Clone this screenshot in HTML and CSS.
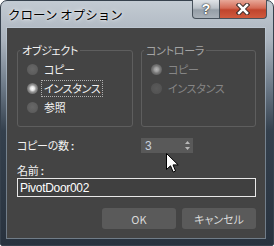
FILE: index.html
```html
<!DOCTYPE html>
<html lang="ja">

<head>
    <meta charset="UTF-8">
    <meta name="viewport" content="width=device-width, initial-scale=1.0">
    <title>クローン オプション</title>
    <link rel="stylesheet" href="styles.css">
</head>

<body>
    <div class="window">
        <!-- タイトルバー -->
        <div class="titlebar">
            <span class="title">クローン オプション</span>
            <div class="caption">
                <span class="btn-help">?</span>
                <span class="btn-close">
                    <svg width="14" height="12" viewBox="0 0 14 12">
                        <path d="M3 2 L11 10 M11 2 L3 10" stroke="#3a2a28" stroke-width="4.5" stroke-linecap="square" />
                        <path d="M3 2 L11 10 M11 2 L3 10" stroke="#ffffff" stroke-width="2.5" stroke-linecap="square" />
                    </svg>
                </span>
            </div>
        </div>

        <div class="client">
            <div class="cols">
                <fieldset class="group">
                    <legend>オブジェクト</legend>
                    <div class="radios">
                        <div class="radio"><span class="dot"></span><span class="lbl">コピー</span></div>
                        <div class="radio"><span class="dot checked"></span><span class="lbl focus">インスタンス</span></div>
                        <div class="radio"><span class="dot"></span><span class="lbl">参照</span></div>
                    </div>
                </fieldset>
                <fieldset class="group disabled">
                    <legend>コントローラ</legend>
                    <div class="radios">
                        <div class="radio"><span class="dot checked"></span><span class="lbl">コピー</span></div>
                        <div class="radio"><span class="dot"></span><span class="lbl">インスタンス</span></div>
                    </div>
                </fieldset>
            </div>

            <div class="cols count-row">
                <label>コピーの数 <span class="colon">:</span></label>
                <div class="spinner">
                    <span>3</span>
                    <svg width="5" height="9" viewBox="0 0 5 9">
                        <path d="M2.5 0 L5 3 L0 3 Z M0 6 L5 6 L2.5 9 Z" fill="#b8b8b8" />
                    </svg>
                </div>
            </div>

            <label class="name-label" for="nome">名前 <span class="colon">:</span></label>
            <input class="name" id="nome" type="text" value="PivotDoor002">

            <div class="actions">
                <button>OK</button>
                <button>キャンセル</button>
            </div>
        </div>

        <!-- マウスカーソル -->
        <svg class="cursor" width="13" height="20" viewBox="0 0 13 20">
            <path d="M0.5 0.5 L0.5 16.5 L4.5 12.8 L7.2 19 L9.6 18 L7 11.9 L12.2 11.9 Z" fill="#ffffff" stroke="#000000" stroke-width="1" stroke-linejoin="miter" />
        </svg>
    </div>
</body>

</html>
```

FILE: styles.css
```css
body {
    margin: 0;
    background: #ffffff;
    font-family: "Noto Sans CJK JP", "Liberation Sans", sans-serif;
}

.window {
    position: relative;
    box-sizing: border-box;
    width: 274px;
    height: 246px;
    border: 1px solid #36414d;
    border-radius: 7px 7px 2px 2px;
    background: linear-gradient(to bottom, #c3cbd3 0, #aab3bd 40px, #6d7a88 85px, #34404d 130px, #28323e 246px);
    display: flex;
    flex-direction: column;
}

.titlebar {
    height: 27px;
    display: flex;
    justify-content: space-between;
    align-items: flex-start;
}

.title {
    padding: 6px 0 0 7px;
    font-size: 12.5px;
    line-height: 16px;
    color: #000000;
    text-shadow: 0 0 5px rgba(255, 255, 255, 0.9), 0 0 2px rgba(255, 255, 255, 0.8);
}

.caption {
    display: flex;
    margin: -1px 6px 0 0;
}

.caption span {
    box-sizing: border-box;
    height: 19px;
    border: 1px solid #48525c;
    border-top: none;
    display: flex;
    align-items: center;
    justify-content: center;
}

.btn-help {
    width: 28px;
    border-radius: 0 0 0 4px;
    background: linear-gradient(to bottom, #dfe3e7 0, #b9c0c7 45%, #959ea7 55%, #a9b1b9 100%);
    color: #ffffff;
    font-family: "Liberation Sans", sans-serif;
    font-weight: bold;
    font-size: 14px;
    text-shadow: 0 0 2px #222, 0 0 1px #222;
}

.btn-close {
    width: 47px;
    border-left: none !important;
    border-radius: 0 0 4px 0;
    background: linear-gradient(to bottom, #e8a899 0, #d46a55 45%, #c0452d 55%, #d05a3e 100%);
}

.client {
    flex: 1;
    margin: 0 8px 7px 6px;
    padding: 15px 9px 0 10px;
    background: #444444;
    box-shadow: 0 0 0 1px rgba(200, 212, 224, 0.45);
    font-size: 11px;
    line-height: 14px;
    letter-spacing: -0.3px;
    color: #f2f2f2;
    font-feature-settings: "palt";
}

.colon {
    font-family: "Liberation Sans", sans-serif;
    font-weight: bold;
}

.cols {
    display: grid;
    grid-template-columns: 116px 115px;
    column-gap: 8px;
}

.group {
    margin: 0;
    padding: 0;
    height: 84px;
    box-sizing: border-box;
    min-width: 0;
    border: 1px solid #5e5e5e;
    border-radius: 3px;
}

.group legend {
    margin-left: 2px;
    padding: 0 2px;
    line-height: 14px;
}

.radios {
    margin-top: 3px;
    padding-left: 9px;
}

.radio {
    height: 19px;
    display: flex;
    align-items: center;
}

.dot {
    box-sizing: border-box;
    width: 11px;
    height: 11px;
    margin-right: 4px;
    border-radius: 50%;
    background: radial-gradient(circle at 50% 45%, #686868 0, #5e5e5e 60%, #555555 100%);
}

.dot.checked {
    background: radial-gradient(circle, #ffffff 0, #e4e4e4 2px, #9a9a9a 3.5px, #6c6c6c 5.5px);
}

.lbl {
    padding: 0 2px;
    line-height: 15px;
    border: 1px solid transparent;
    margin-left: -1px;
}

.lbl.focus {
    border: 1px dotted #b0b0b0;
}

.disabled legend {
    color: #a4a4a4;
}

.disabled .lbl {
    color: #868686;
}

.disabled .dot {
    background: radial-gradient(circle, #5a5a5a 0, #505050 100%);
}

.disabled .dot.checked {
    background: radial-gradient(circle, #b4b4b4 0, #a0a0a0 2px, #7c7c7c 3.5px, #606060 5.5px);
}

.count-row {
    margin-top: 11px;
    align-items: center;
}

.spinner {
    box-sizing: border-box;
    width: 52px;
    height: 15px;
    padding: 0 3px 0 4px;
    background: #595959;
    display: flex;
    align-items: center;
    justify-content: space-between;
    color: #c9d1de;
    font-family: "Liberation Sans", sans-serif;
    font-size: 12px;
}

.name-label {
    display: block;
    margin-top: 10px;
    height: 15px;
}

.name {
    display: block;
    box-sizing: border-box;
    width: 239px;
    height: 19px;
    margin: 0;
    padding: 0 2px;
    border: 1px solid #e8e8e8;
    background: #404040;
    color: #ffffff;
    font-family: "Liberation Sans", sans-serif;
    font-size: 12px;
    letter-spacing: -0.3px;
    outline: none;
}

.actions {
    display: flex;
    justify-content: flex-end;
    gap: 6px;
    margin-top: 11px;
}

button {
    width: 74px;
    height: 21px;
    padding: 0;
    border: none;
    border-radius: 3px;
    background: #5a5a5a;
    color: #d8d8d8;
    font-family: "Noto Sans CJK JP", sans-serif;
    font-feature-settings: "palt";
    font-size: 11px;
}

.cursor {
    position: absolute;
    left: 165px;
    top: 152px;
}
```
